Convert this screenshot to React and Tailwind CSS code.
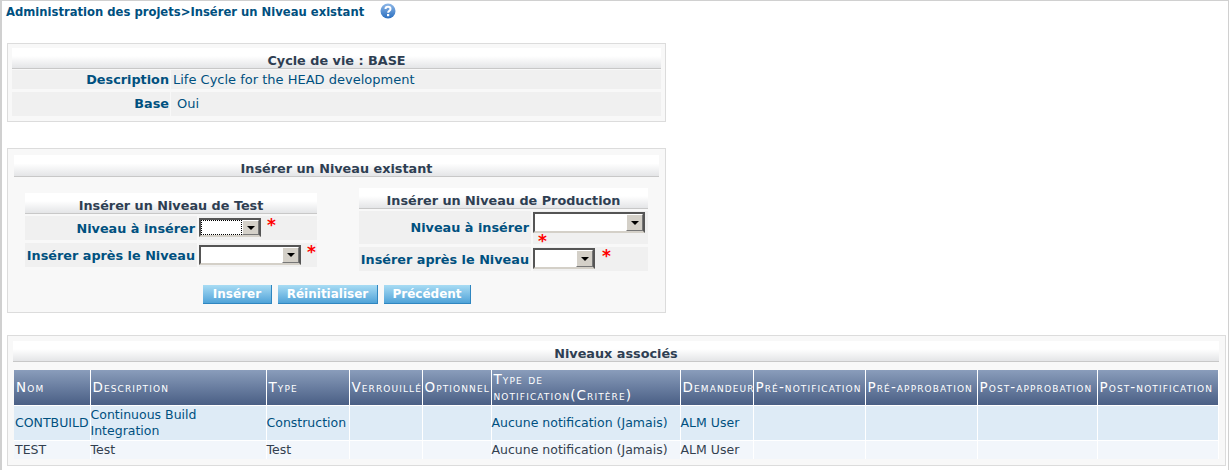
const font = { fontFamily: '"DejaVu Sans", Verdana, sans-serif' };

const columns = [
  { label: 'Nom', cls: 'w-[76px]' },
  { label: 'Description', cls: 'w-[176px]' },
  { label: 'Type', cls: 'w-[83px]' },
  { label: 'Verrouillé', cls: 'w-[73px]' },
  { label: 'Optionnel', cls: 'w-[69px]' },
  { label: 'Type de notification(Critère)', cls: 'w-[189px]' },
  { label: 'Demandeur', cls: 'w-[73px]' },
  { label: 'Pré-notification', cls: 'w-[112px]' },
  { label: 'Pré-approbation', cls: 'w-[112px]' },
  { label: 'Post-approbation', cls: 'w-[120px]' },
  { label: 'Post-notification', cls: 'w-[121px]' },
];

const rows = [
  {
    id: 'contbuild',
    cells: ['CONTBUILD', 'Continuous Build Integration', 'Construction', '', '', 'Aucune notification (Jamais)', 'ALM User', '', '', '', ''],
    cls: 'bg-[#deebf6] text-[#00507f] h-[35px]',
  },
  {
    id: 'test',
    cells: ['TEST', 'Test', 'Test', '', '', 'Aucune notification (Jamais)', 'ALM User', '', '', '', ''],
    cls: 'bg-[#f2f6fb] text-[#333f4f] h-[19px]',
  },
];

function SectionTitle({ children, className = '' }) {
  return (
    <div className={`flex items-end justify-center border-b border-[#c8c8c8] bg-gradient-to-b from-white from-40% to-[#e4e5e7] text-[12.8px] leading-[15px] font-bold text-[#2e3e52] ${className}`}>
      {children}
    </div>
  );
}

function Star({ className = '' }) {
  return <span className={`text-[17px] leading-none font-bold text-[#ff0000] ${className}`}>*</span>;
}

function SelectBox({ className = '', focused = false }) {
  return (
    <div className={`flex border-2 border-r-[#555] border-t-[#555] border-l-[#555] border-b-[#d4d0c8] bg-white ${className}`}>
      <div className={`flex-1 ${focused ? 'border border-dotted border-black' : ''}`} />
      <div className="flex w-[17px] items-center justify-center border border-t-white border-l-white border-r-[#777] border-b-[#777] bg-[#d4d0c8]">
        <svg width="8" height="4" viewBox="0 0 8 4">
          <path d="M0 0h8L4 4z" fill="#000" />
        </svg>
      </div>
    </div>
  );
}

function HelpIcon() {
  return (
    <svg width="16" height="16" viewBox="0 0 16 16" className="ml-[16px]">
      <defs>
        <linearGradient id="help" x1="0" y1="0" x2="0" y2="1">
          <stop offset="0" stopColor="#8fb8e8" />
          <stop offset="1" stopColor="#2a6fc0" />
        </linearGradient>
      </defs>
      <circle cx="8" cy="8" r="7.5" fill="url(#help)" />
      <path d="M5.5 6c0-3 5-3 5 0 0 2-2.4 1.8-2.4 3.8" fill="none" stroke="#fff" strokeWidth="2" />
      <rect x="7" y="11" width="2.2" height="2.2" fill="#fff" />
    </svg>
  );
}

function ActionButton({ children, className = '' }) {
  return (
    <button className={`h-[19px] border-b border-r border-[#2f86c0] bg-gradient-to-b from-[#a8dcf4] to-[#4fa3d8] text-[12px] leading-none font-bold text-white ${className}`}>
      {children}
    </button>
  );
}

export default function App() {
  return (
    <div style={font} className="h-[470px] w-[1229px] overflow-hidden border-t border-r border-l-2 border-[#d0d0d0] bg-white">
      {/* Breadcrumb */}
      <div className="flex h-[42px] items-start pt-[2px] pl-[4px]">
        <span className="mt-[2px] text-[11.6px] leading-[14px] font-bold text-[#00507f]">Administration des projets&gt;Insérer un Niveau existant</span>
        <HelpIcon />
      </div>

      {/* Life cycle */}
      <div className="ml-[5px] h-[79px] w-[659px] border border-[#dcdcdc] bg-[#f8f8f8] px-[4px] pt-[4px]">
        <SectionTitle className="h-[21px]">Cycle de vie : BASE</SectionTitle>
        <div className="mt-[1px] grid grid-cols-[158px_1fr] gap-x-[1px] gap-y-[3px] text-[13px] text-[#00507f]">
          <div className="h-[19px] bg-[#f0f0f0] pr-[1px] text-right text-[12.8px] leading-[20px] font-bold">Description</div>
          <div className="h-[19px] bg-[#f0f0f0] pl-[2px] leading-[20px]">Life Cycle for the HEAD development</div>
          <div className="h-[24px] bg-[#f0f0f0] pr-[1px] text-right text-[12.8px] leading-[24px] font-bold">Base</div>
          <div className="h-[24px] bg-[#f0f0f0] pl-[6px] leading-[24px]">Oui</div>
        </div>
      </div>

      {/* Insert form */}
      <div className="mt-[26px] ml-[5px] h-[165px] w-[659px] border border-[#dcdcdc] bg-[#f8f8f8] px-[6px] pt-[6px]">
        <SectionTitle className="h-[22px]">Insérer un Niveau existant</SectionTitle>
        <div className="relative flex h-[107px] items-start">
          <div className="mt-[16px] ml-[11px] w-[292px]">
            <SectionTitle className="h-[21px]">Insérer un Niveau de Test</SectionTitle>
            <div className="mt-[2px] grid grid-cols-[172px_118px] gap-x-[2px] gap-y-[3px] text-[12.8px] font-bold text-[#00507f]">
              <div className="h-[24px] bg-[#f0f0f0] pr-[2px] text-right leading-[25px]">Niveau à insérer</div>
              <div className="flex h-[24px] items-start bg-[#f0f0f0] pt-[2px]">
                <SelectBox focused className="h-[19px] w-[62px]" />
                <Star className="mt-[-1px] ml-[6px]" />
              </div>
              <div className="h-[24px] bg-[#f0f0f0] pr-[2px] text-right leading-[25px]">Insérer après le Niveau</div>
              <div className="flex h-[24px] items-start bg-[#f0f0f0] pt-[2px]">
                <SelectBox className="h-[20px] w-[102px]" />
                <Star className="mt-[-1px] ml-[6px]" />
              </div>
            </div>
          </div>
          <div className="mt-[11px] ml-[42px] w-[289px]">
            <SectionTitle className="h-[21px]">Insérer un Niveau de Production</SectionTitle>
            <div className="mt-[2px] grid grid-cols-[172px_115px] gap-x-[2px] gap-y-[3px] text-[12.8px] font-bold text-[#00507f]">
              <div className="h-[33px] bg-[#f0f0f0] pr-[2px] text-right leading-[34px]">Niveau à insérer</div>
              <div className="h-[33px] bg-[#f0f0f0] pt-[1px]">
                <SelectBox className="h-[21px] w-[112px]" />
                <Star className="ml-[5px] block h-[10px]" />
              </div>
              <div className="h-[24px] bg-[#f0f0f0] pr-[2px] text-right leading-[25px]">Insérer après le Niveau</div>
              <div className="flex h-[24px] items-start bg-[#f0f0f0] pt-[1px]">
                <SelectBox className="h-[21px] w-[62px]" />
                <Star className="ml-[7px]" />
              </div>
            </div>
          </div>
        </div>
        <div className="mt-[1px] ml-[189px] flex gap-[6px]">
          <ActionButton className="w-[69px]">Insérer</ActionButton>
          <ActionButton className="w-[100px]">Réinitialiser</ActionButton>
          <ActionButton className="w-[87px]">Précédent</ActionButton>
        </div>
      </div>

      {/* Associated levels */}
      <div className="mt-[22px] ml-[5px] h-[131px] w-[1219px] border border-[#dcdcdc] bg-[#f8f8f8] px-[5px] pt-[5px]">
        <SectionTitle className="h-[21px] w-[1206px]">Niveaux associés</SectionTitle>
        <table className="mt-[8px] ml-[1px] w-[1204px] table-fixed border-collapse text-[12.5px]">
          <colgroup>
            {columns.map((col) => (
              <col key={col.label} className={col.cls} />
            ))}
          </colgroup>
          <thead>
            <tr className="h-[35px] bg-gradient-to-b from-[#8a9dbb] to-[#4a5f85]">
              {columns.map((col) => (
                <th key={col.label} className="border-r border-white pl-[2px] text-left text-[13.5px] leading-[16px] font-normal tracking-[1.1px] whitespace-normal text-white [font-variant:small-caps]">
                  {col.label}
                </th>
              ))}
            </tr>
          </thead>
          <tbody>
            {rows.map((row) => (
              <tr key={row.id} className={`border-t border-white ${row.cls}`}>
                {row.cells.map((cell, i) => (
                  <td key={i} className="border-r border-white pl-0 leading-[16px] first:pl-[1px]">{cell}</td>
                ))}
              </tr>
            ))}
          </tbody>
        </table>
      </div>
    </div>
  );
}
